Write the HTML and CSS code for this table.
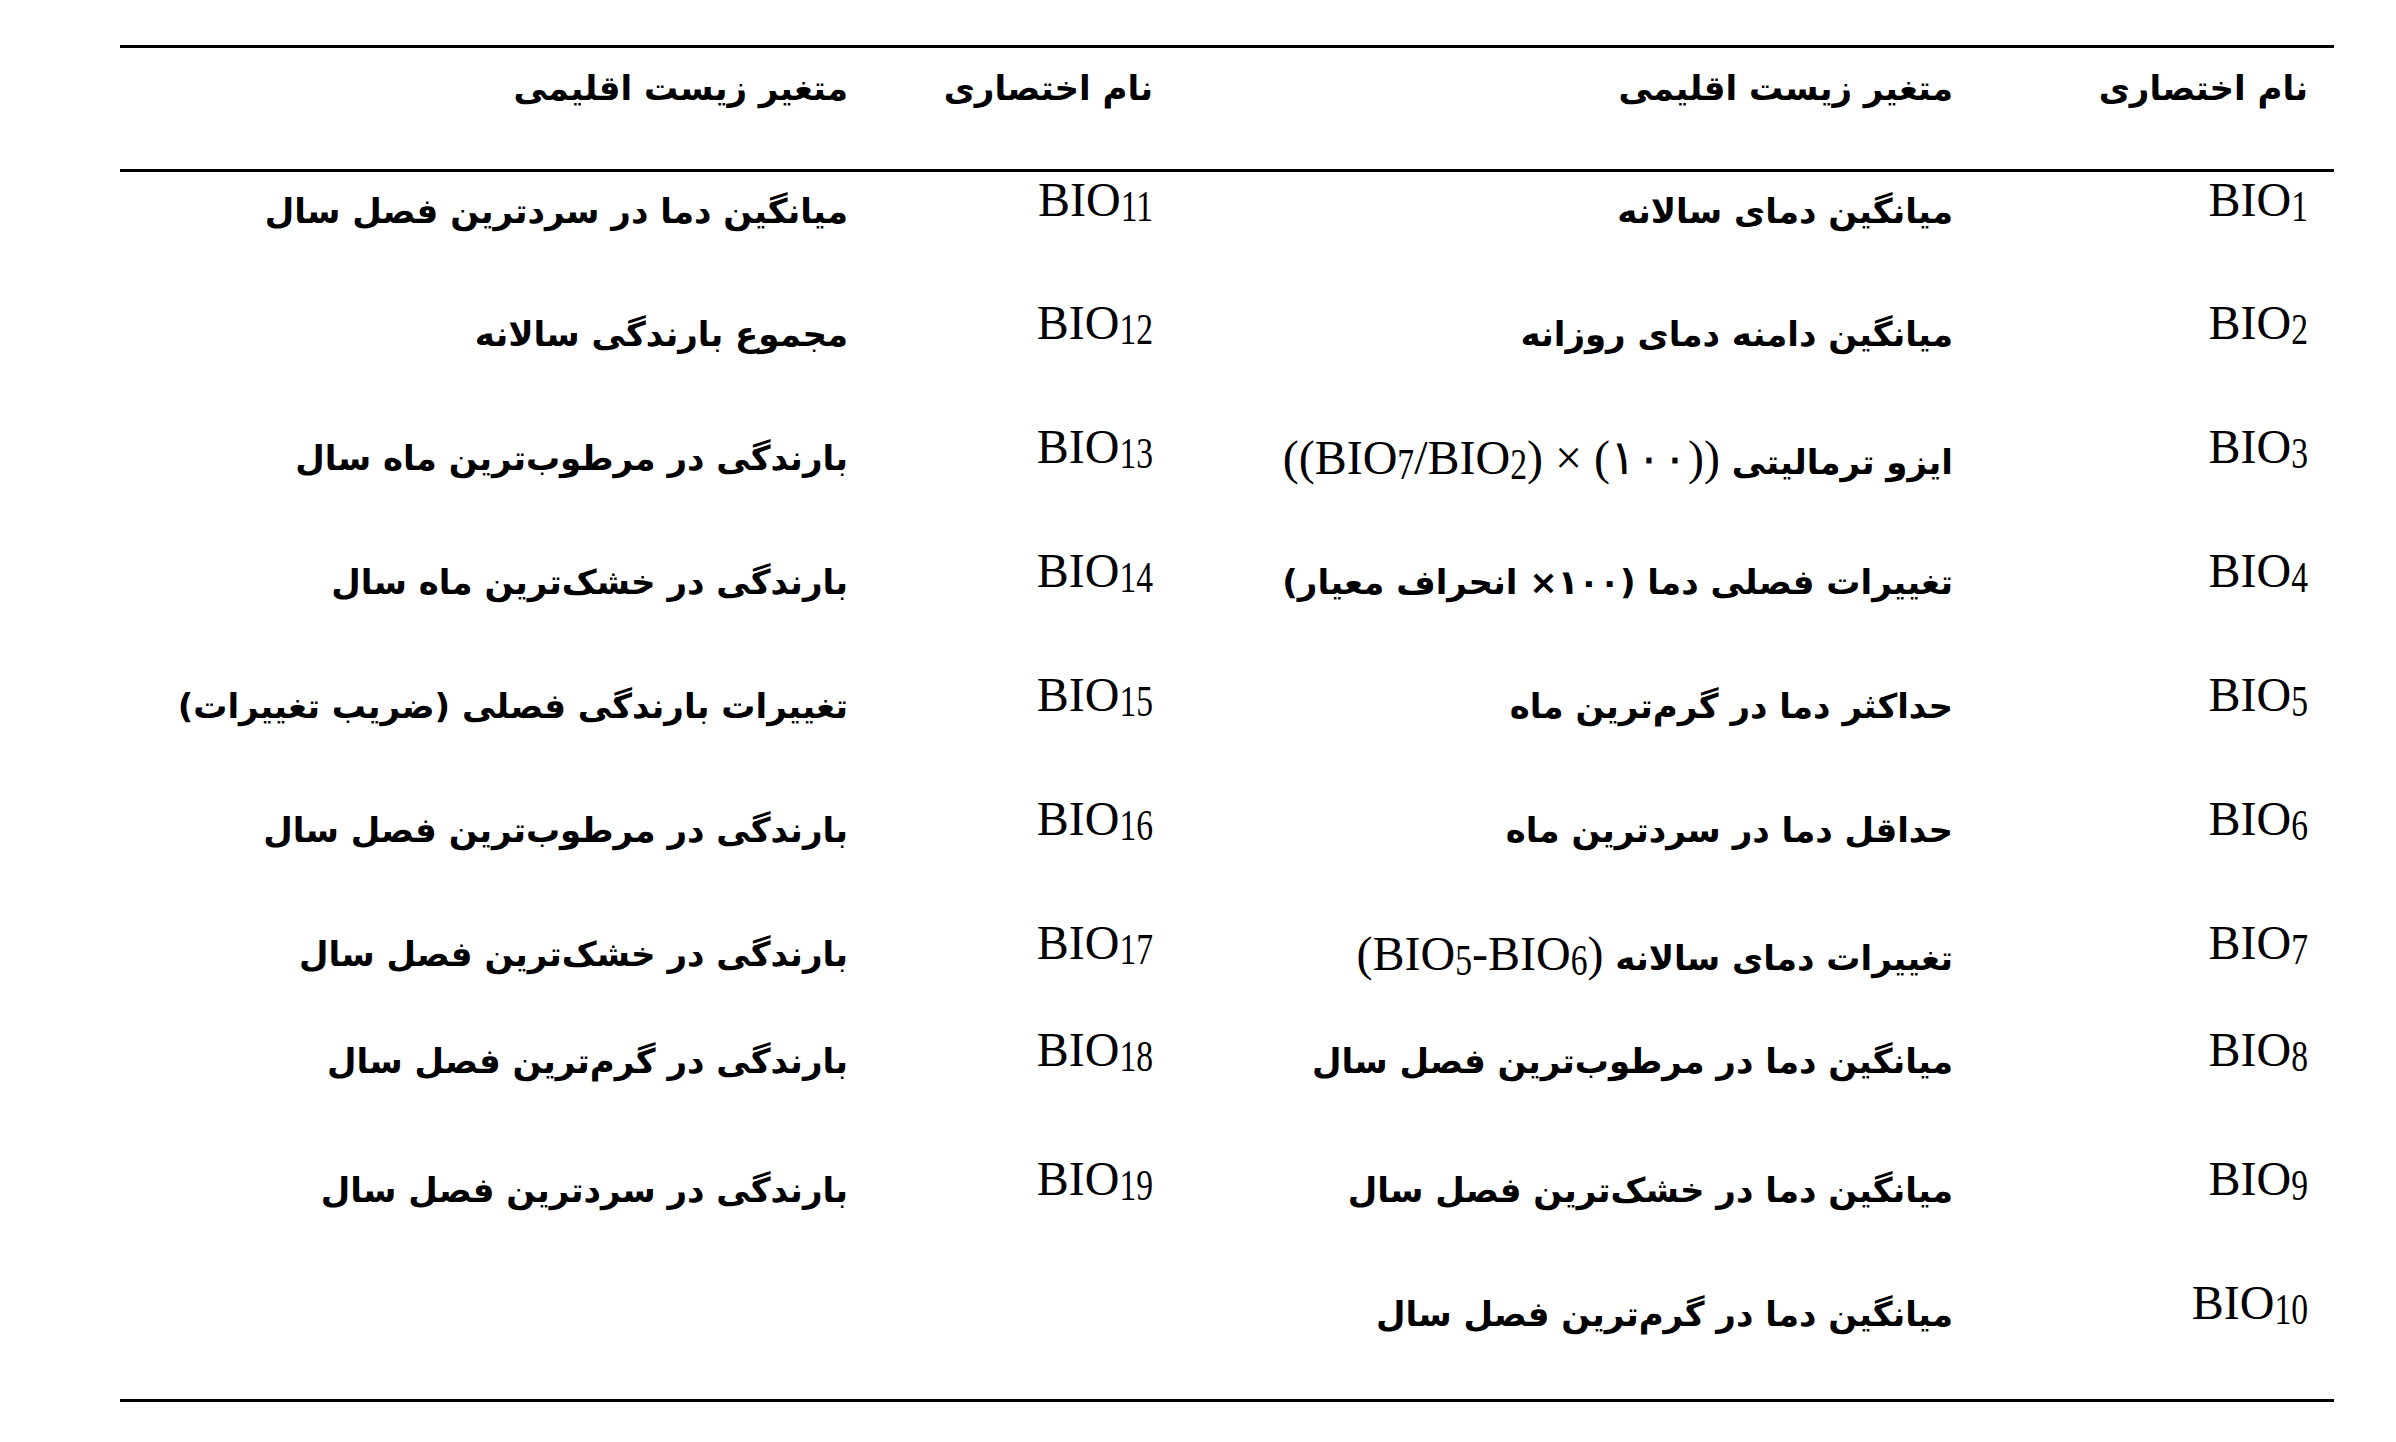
FILE: index.html
```html
<!DOCTYPE html>
<html lang="fa">
<head>
<meta charset="utf-8">
<title>متغیرهای زیست اقلیمی</title>
<link rel="stylesheet" href="styles.css">
</head>
<body>
<table class="bio" dir="rtl">
  <colgroup>
    <col class="c-abbr1">
    <col class="c-var1">
    <col class="c-abbr2">
    <col class="c-var2">
  </colgroup>
  <thead>
    <tr class="head">
      <th class="fa first">نام اختصاری</th>
      <th class="fa">متغیر زیست اقلیمی</th>
      <th class="fa">نام اختصاری</th>
      <th class="fa">متغیر زیست اقلیمی</th>
    </tr>
  </thead>
  <tbody>
    <tr class="r">
      <td class="code first">BIO<span class="sub">1</span></td>
      <td class="fa">میانگین دمای سالانه</td>
      <td class="code">BIO<span class="sub">11</span></td>
      <td class="fa">میانگین دما در سردترین فصل سال</td>
    </tr>
    <tr class="r">
      <td class="code first">BIO<span class="sub">2</span></td>
      <td class="fa">میانگین دامنه دمای روزانه</td>
      <td class="code">BIO<span class="sub">12</span></td>
      <td class="fa">مجموع بارندگی سالانه</td>
    </tr>
    <tr class="r">
      <td class="code first">BIO<span class="sub">3</span></td>
      <td class="fa">ایزو ترمالیتی <span class="ltr" dir="ltr">((BIO<span class="sub">7</span>/BIO<span class="sub">2</span>) × (۱۰۰))</span></td>
      <td class="code">BIO<span class="sub">13</span></td>
      <td class="fa">بارندگی در مرطوب‌ترین ماه سال</td>
    </tr>
    <tr class="r">
      <td class="code first">BIO<span class="sub">4</span></td>
      <td class="fa">تغییرات فصلی دما (۱۰۰× انحراف معیار)</td>
      <td class="code">BIO<span class="sub">14</span></td>
      <td class="fa">بارندگی در خشک‌ترین ماه سال</td>
    </tr>
    <tr class="r">
      <td class="code first">BIO<span class="sub">5</span></td>
      <td class="fa">حداکثر دما در گرم‌ترین ماه</td>
      <td class="code">BIO<span class="sub">15</span></td>
      <td class="fa">تغییرات بارندگی فصلی (ضریب تغییرات)</td>
    </tr>
    <tr class="r">
      <td class="code first">BIO<span class="sub">6</span></td>
      <td class="fa">حداقل دما در سردترین ماه</td>
      <td class="code">BIO<span class="sub">16</span></td>
      <td class="fa">بارندگی در مرطوب‌ترین فصل سال</td>
    </tr>
    <tr class="r r-short">
      <td class="code first">BIO<span class="sub">7</span></td>
      <td class="fa">تغییرات دمای سالانه <span class="ltr" dir="ltr">(BIO<span class="sub">5</span>-BIO<span class="sub">6</span>)</span></td>
      <td class="code">BIO<span class="sub">17</span></td>
      <td class="fa">بارندگی در خشک‌ترین فصل سال</td>
    </tr>
    <tr class="r r-tall">
      <td class="code first">BIO<span class="sub">8</span></td>
      <td class="fa">میانگین دما در مرطوب‌ترین فصل سال</td>
      <td class="code">BIO<span class="sub">18</span></td>
      <td class="fa">بارندگی در گرم‌ترین فصل سال</td>
    </tr>
    <tr class="r">
      <td class="code first">BIO<span class="sub">9</span></td>
      <td class="fa">میانگین دما در خشک‌ترین فصل سال</td>
      <td class="code">BIO<span class="sub">19</span></td>
      <td class="fa">بارندگی در سردترین فصل سال</td>
    </tr>
    <tr class="r last">
      <td class="code first">BIO<span class="sub">10</span></td>
      <td class="fa">میانگین دما در گرم‌ترین فصل سال</td>
      <td class="code"></td>
      <td class="fa"></td>
    </tr>
  </tbody>
</table>
</body>
</html>
```
FILE: styles.css
```css
html, body {
  margin: 0;
  padding: 0;
  background: #ffffff;
}

body {
  padding: 45px 0 0 120px;
  color: #000;
}

.bio {
  border-collapse: collapse;
  table-layout: fixed;
  width: 2214px;
  color: #000;
}

.c-abbr1 { width: 359px; }
.c-var1 { width: 800px; }
.c-abbr2 { width: 305px; }
.c-var2 { width: 750px; }

.bio th,
.bio td {
  padding: 0 22px 0 0;
  text-align: right;
  vertical-align: top;
  white-space: nowrap;
}

.bio .first {
  padding-right: 26px;
}

.head {
  height: 124px;
}

.head th {
  border-top: 3px solid #000;
  border-bottom: 3px solid #000;
  font-weight: bold;
}

.fa {
  font-family: "DejaVu Sans", sans-serif;
  font-size: 34px;
  font-weight: bold;
  line-height: 40px;
}

.head .fa {
  padding-top: 20px;
}

.r {
  height: 124px;
}

.r .fa {
  padding-top: 19px;
}

.r.r-short { height: 107px; }
.r.r-tall { height: 129px; }
.r.last { height: 126px; }

.r.last td {
  border-bottom: 3px solid #000;
}

.code {
  direction: ltr;
  font-family: "Liberation Serif", "Times New Roman", serif;
  font-size: 48px;
  line-height: 55px;
}

.ltr {
  font-family: "Liberation Serif", "Times New Roman", serif;
  font-size: 48px;
  font-weight: normal;
  unicode-bidi: isolate;
}

.sub {
  display: inline-block;
  font-size: 0.7em;
  line-height: 1;
  vertical-align: -7px;
  transform: scaleY(1.3);
  transform-origin: 50% 100%;
}
```
